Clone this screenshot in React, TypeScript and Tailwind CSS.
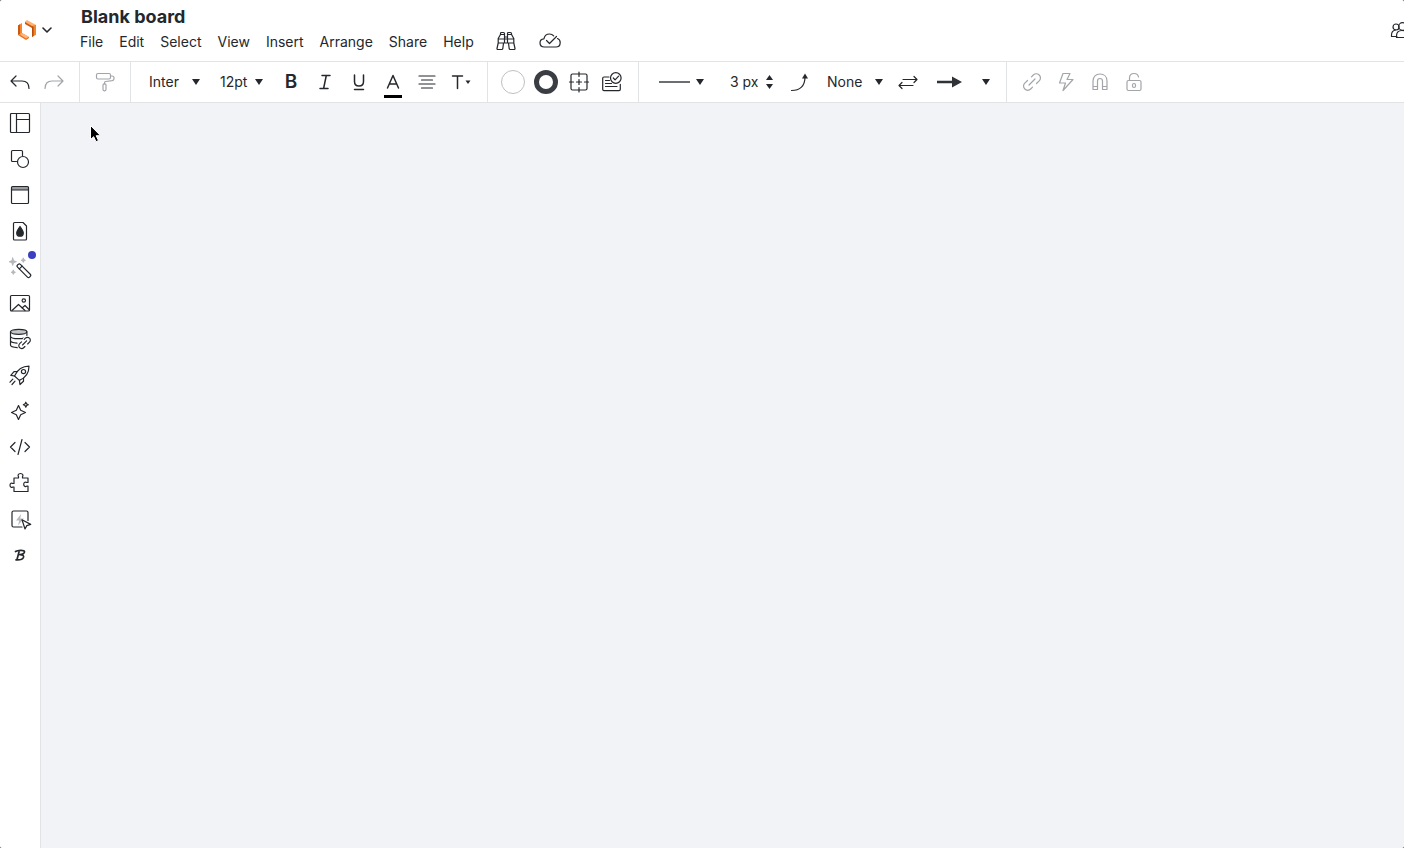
import React from "react";

type IconProps = { children: React.ReactNode; w?: number; h?: number; className?: string; sw?: number };

function Svg({ children, w = 24, h = 24, className = "", sw = 1.2 }: IconProps) {
  return (
    <svg
      width={w}
      height={h}
      viewBox={`0 0 ${w} ${h}`}
      fill="none"
      stroke="currentColor"
      strokeWidth={sw}
      strokeLinecap="round"
      strokeLinejoin="round"
      className={"shrink-0 " + className}
      aria-hidden="true"
    >
      {children}
    </svg>
  );
}

function Caret({ className = "" }: { className?: string }) {
  return (
    <svg width="8" height="6" viewBox="0 0 8 6" fill="currentColor" className={"pointer-events-none shrink-0 " + className} aria-hidden="true">
      <path d="M0 0h8L4 6z" />
    </svg>
  );
}

const chain =
  "M9 15l6-6M11.500 6.800 13.300 5c1.700-1.700 4.300-1.700 5.900 0 1.700 1.600 1.700 4.200 0 5.900L16.500 13.500M12.500 17.200 10.700 19c-1.700 1.700-4.300 1.700-5.900 0-1.700-1.600-1.700-4.200 0-5.900L7.500 10.500";

const menus = ["File", "Edit", "Select", "View", "Insert", "Arrange", "Share", "Help"];

function Header() {
  return (
    <header className="flex h-[62px] items-stretch overflow-hidden border-b border-[#e2e3e5] bg-white">
      <button aria-label="Home menu" className="flex w-[80px] shrink-0 items-center gap-1 pb-0.5 pl-4">
        <svg width="22" height="24" viewBox="0 0 22 24" aria-hidden="true">
          <path d="M2 7.500 6 5v10l-4 2z" fill="#f9842b" />
          <path d="M2 7.500 4 6.300V16l-2 1z" fill="#c65a12" />
          <path d="M2 17l4-2 7 4.200V20l-3 2z" fill="#e8701a" />
          <path d="M6 15l7 3.800-3 1.600-6-3.600z" fill="#ffb375" />
          <path d="M9 3.600 11 2l9 5-3 1.800-8-4.200z" fill="#ffb072" />
          <path d="M9 4v2l7 4V8z" fill="#c9580d" />
          <path d="M16 8l4-1.200v10L16 19z" fill="#f08530" />
          <path d="M16 8l1.600 1v9L16 19z" fill="#b84d0b" />
        </svg>
        <Svg w={10} h={8} sw={1.6}>
          <path d="M1 2l4 4 4-4" />
        </Svg>
      </button>
      <div className="flex flex-col pt-[5px]">
        <h1 className="pl-px text-[18px] leading-6 font-bold">Blank board</h1>
        <nav aria-label="Main menu" className="flex h-6 items-center gap-4 text-[14px]">
          {menus.map((m) => (
            <button key={m}>{m}</button>
          ))}
          <button aria-label="Find" className="ml-1">
            <Svg w={24} h={22}>
              <path d="M6.500 4.500V3.500c0-.6.400-1 1-1h2c.6 0 1 .4 1 1V13M13.500 13V3.500c0-.6.400-1 1-1h2c.6 0 1 .4 1 1v1M6.500 4.500h4M13.500 4.500h4M6.500 4.500 4.200 8.500V13L3 18.500c-.1.600.2 1 .8 1h4c.6 0 .9-.3 1-.8L9.500 13h5l.7 5.700c.1.500.4.800 1 .8h4c.6 0 .9-.4.800-1L19.800 13V8.500l-2.300-4M4.200 13h15.600M10.500 7h3M4.200 9h15.600" />
            </Svg>
          </button>
          <button aria-label="Saved" className="ml-1">
            <Svg w={24} h={22}>
              <path d="M19.500 8.500c1.800.6 2.700 2 2.700 3.900 0 2.800-1.700 4.600-4.400 4.600H6.300C3.700 17 2 15.300 2 13s1.500-3.900 3.900-4.100C6.500 6 8.700 4 11.600 4c1.700 0 3 .6 4.100 1.800" />
              <path d="M8.500 10.500l3 3 7-7" />
            </Svg>
          </button>
        </nav>
      </div>
      <button aria-label="Collaborators" className="-mr-2 ml-auto flex items-center pb-0.5">
        <Svg w={24} h={24}>
          <circle cx="8" cy="9" r="3" />
          <path d="M9 18.500H3.500V17c0-3 1.500-4.500 4-5M8.500 19.500V18c0-3.500 2-5.500 5.500-5.500s6 2 6 5.500v1.500z" />
          <circle cx="14.500" cy="8.500" r="3.800" />
        </Svg>
      </button>
    </header>
  );
}

function Tool({ label, children, muted = false, width = "w-[34px]", className = "" }: { label: string; children: React.ReactNode; muted?: boolean; width?: string; className?: string }) {
  return (
    <button aria-label={label} className={"flex h-10 shrink-0 items-center justify-center " + width + " " + (muted ? "text-[#a3a5a9] " : "") + className}>
      {children}
    </button>
  );
}

function Pick({ label, value, options, className }: { label: string; value: string; options: string[]; className: string }) {
  return (
    <label className={"grid shrink-0 items-center " + className}>
      <select aria-label={label} defaultValue={value} className="col-start-1 row-start-1 h-10 w-full appearance-none bg-transparent pb-0.5 outline-none">
        {options.map((o) => (
          <option key={o}>{o}</option>
        ))}
      </select>
      <Caret className="col-start-1 row-start-1 justify-self-end" />
    </label>
  );
}

function Toolbar() {
  const group = "flex shrink-0 items-center border-r border-[#e2e3e5]";
  return (
    <div role="toolbar" aria-label="Formatting" className="flex h-[41px] items-stretch overflow-hidden border-b border-[#e2e3e5] bg-white text-[14px]">
      <div className={group + " w-[80px] pl-[3px]"}>
        <Tool label="Undo">
          <Svg>
            <path d="M8 6 3 11l5 5M3 11h11c4 0 7 2.500 7 7.500" />
          </Svg>
        </Tool>
        <Tool label="Redo" muted>
          <Svg>
            <path d="M16 6l5 5-5 5M21 11H10c-4 0-7 2.500-7 7.500" />
          </Svg>
        </Tool>
      </div>
      <div className={group + " w-[51px] justify-center"}>
        <Tool label="Copy format" muted>
          <Svg>
            <rect x="3.500" y="3.500" width="14" height="5.500" rx="1.500" />
            <path d="M17.500 6h1.500c1.500 0 2 .8 2 2v.8c0 1.200-.6 1.700-1.700 1.900l-6.600.8c-.8.1-1.200.5-1.200 1.300v1" />
            <rect x="10" y="13.800" width="3" height="7" rx="1.200" />
          </Svg>
        </Tool>
      </div>
      <div className={group + " w-[357px] pl-[18px]"}>
        <Pick label="Font" value="Inter" options={["Inter", "Roboto", "Lato"]} className="mr-5 w-[51px]" />
        <Pick label="Font size" value="12pt" options={["10pt", "12pt", "14pt"]} className="mr-[11px] w-[43px]" />
        <Tool label="Bold">
          <span className="text-[19px] font-semibold">B</span>
        </Tool>
        <Tool label="Italic">
          <Svg sw={1.5}>
            <path d="M9 5.500h8M7 18.500h8M13.300 5.500l-2.700 13" />
          </Svg>
        </Tool>
        <Tool label="Underline">
          <Svg sw={1.5}>
            <path d="M7.500 5v6.500c0 3 1.500 4.500 4.500 4.500s4.500-1.500 4.500-4.500V5" />
            <path d="M7.500 19.500h9" />
          </Svg>
        </Tool>
        <Tool label="Text color">
          <Svg w={24} h={32} sw={1.5}>
            <path d="M6.500 22 12 9.500 17.500 22M8.500 18h7" />
            <path d="M3 31h18" stroke="#000" strokeWidth="4" strokeLinecap="butt" />
          </Svg>
        </Tool>
        <Tool label="Align text">
          <Svg>
            <path d="M4 6h16M6.500 10h11M4 14h16M6.500 18h11" />
          </Svg>
        </Tool>
        <Tool label="Text options">
          <Svg sw={1.5}>
            <path d="M3.500 6h10M8.500 6v12.500" />
            <path d="M16.500 10.500h5L19 14z" fill="currentColor" stroke="none" />
          </Svg>
        </Tool>
      </div>
      <div className={group + " w-[151px] pl-2"}>
        <Tool label="Fill color" width="w-[33px]">
          <span className="size-6 rounded-full border border-[#bfc0c3]" />
        </Tool>
        <Tool label="Border color" width="w-[33px]">
          <span className="size-6 rounded-full border-[5px] border-[#3a3e44]" />
        </Tool>
        <Tool label="Crop shape" width="w-[33px]">
          <Svg>
            <rect x="4" y="4" width="16" height="16" rx="1.500" />
            <path d="M12 2v4.500M12 17.500V22M2.500 12h4M17.500 12h4M12 9.500v5M9.500 12h5" />
          </Svg>
        </Tool>
        <Tool label="Shape options">
          <Svg>
            <path d="M9 7H4c-.8 0-1.300.5-1.300 1.300v11c0 .8.500 1.300 1.300 1.300h15c.8 0 1.300-.5 1.300-1.300v-5M5.500 10.500h4M5.500 13.500h6M5.500 16.500h11.500" />
            <circle cx="15.800" cy="8" r="5.300" />
            <path d="M13.300 8l1.800 1.900 3.500-3.700" />
          </Svg>
        </Tool>
      </div>
      <div className={group + " w-[368px] pl-5"}>
        <button aria-label="Line style" className="flex h-10 items-center gap-1.5">
          <span className="h-0.5 w-[31px] bg-[#6b6e73]" />
          <Caret />
        </button>
        <label className="ml-[26px] flex w-9">
          <input aria-label="Line width" defaultValue="3 px" className="h-10 w-full bg-transparent pb-0.5 outline-none" />
        </label>
        <div className="flex flex-col gap-1">
          <button aria-label="Increase line width">
            <svg width="7" height="5" viewBox="0 0 7 5" fill="currentColor" className="block" aria-hidden="true">
              <path d="M0 5h7L3.500 0z" />
            </svg>
          </button>
          <button aria-label="Decrease line width">
            <svg width="7" height="5" viewBox="0 0 7 5" fill="currentColor" className="block" aria-hidden="true">
              <path d="M0 0h7L3.500 5z" />
            </svg>
          </button>
        </div>
        <Tool label="Line shape" className="mx-2.5">
          <Svg>
            <path d="M3.500 20.500C12 20.500 17 16 17 7" />
            <path d="M14 8.500h6L17 3.500z" fill="currentColor" stroke="none" />
          </Svg>
        </Tool>
        <Pick label="Line start" value="None" options={["None", "Arrow"]} className="mr-2 w-[56px]" />
        <Tool label="Swap ends">
          <Svg>
            <path d="M7 9.500h14M18 6.500l3 3-3 3M17 15.500H3M6 12.500l-3 3 3 3" />
          </Svg>
        </Tool>
        <button aria-label="Line end" className="ml-3 flex h-10 items-center gap-5">
          <svg width="25" height="12" viewBox="0 0 25 12" fill="#2f3237" aria-hidden="true">
            <path d="M0 4.800h15V0.500L25 6l-10 5.500V7.200H0z" />
          </svg>
          <Caret />
        </button>
      </div>
      <div className="flex items-center pl-2">
        <Tool label="Link" muted>
          <Svg>
            <path d={chain} />
          </Svg>
        </Tool>
        <Tool label="Actions" muted>
          <Svg>
            <path d="M9 3.500h7L13 9.500h6L9 20.500l2.500-7.500h-6z" />
          </Svg>
        </Tool>
        <Tool label="Magnetize" muted>
          <Svg>
            <path d="M5 19.500V11c0-4.500 3-7 7-7s7 2.500 7 7v8.500h-4.500V11c0-1.600-1-2.500-2.500-2.500S9.500 9.400 9.500 11v8.500zM5 16.500h4.500M14.500 16.500H19" />
          </Svg>
        </Tool>
        <Tool label="Lock" muted>
          <Svg>
            <rect x="5" y="10.500" width="14" height="10" rx="1.500" />
            <path d="M7.500 10.500V8c0-2.800 1.700-4.500 4.500-4.500 2.500 0 4.200 1.500 4.500 3.500" />
            <rect x="10.500" y="13.500" width="3" height="4" rx="1.500" />
          </Svg>
        </Tool>
      </div>
    </div>
  );
}

const panels: { label: string; icon: React.ReactNode }[] = [
  {
    label: "Templates",
    icon: <path d="M3.500 2.500h17c.6 0 1 .4 1 1v17c0 .6-.4 1-1 1h-17c-.6 0-1-.4-1-1v-17c0-.6.4-1 1-1zM8.500 2.500v19M8.500 8.500h13" />,
  },
  {
    label: "Shapes",
    icon: (
      <>
        <path d="M8.500 14.500h-4c-.6 0-1-.4-1-1v-9c0-.6.4-1 1-1h9c.6 0 1 .4 1 1v4" />
        <circle cx="15" cy="15" r="5.500" />
      </>
    ),
  },
  {
    label: "Frames",
    icon: (
      <>
        <path d="M4 4h16v3H4z" fill="#9a9c9f" stroke="none" />
        <rect x="3.500" y="3.500" width="17" height="17" rx="1" />
        <path d="M3.500 7h17" />
      </>
    ),
  },
  {
    label: "Page color",
    icon: (
      <>
        <path d="M6.500 3.500H15l3.500 3.500v13c0 .6-.4 1-1 1h-11c-.6 0-1-.4-1-1v-15.500c0-.6.4-1 1-1z" />
        <path d="M12 7.500c2 2.700 3.300 4.600 3.300 6.400 0 2-1.400 3.300-3.300 3.300s-3.300-1.300-3.300-3.300c0-1.800 1.300-3.700 3.300-6.400z" fill="currentColor" />
      </>
    ),
  },
  {
    label: "Magic tools",
    icon: (
      <>
        <path
          d="M4.700 3l.9 2.800 2.800.9-2.800.9-.9 2.800-.9-2.800L1 6.700l2.800-.9zM15.300 3.200l.6 1.500 1.500.6-1.500.6-.6 1.500-.6-1.500-1.500-.6 1.500-.6zM5.300 15.200l.6 1.500 1.500.6-1.500.6-.6 1.500-.6-1.500-1.500-.6 1.500-.6z"
          fill="#b5b7ba"
          stroke="#b5b7ba"
          strokeWidth="1"
        />
        <g transform="rotate(45 15.900 15.700)">
          <rect x="7.400" y="13.700" width="17" height="4" rx="1.500" />
          <path d="M11.400 13.700v4" />
        </g>
      </>
    ),
  },
  {
    label: "Images",
    icon: (
      <>
        <rect x="2.500" y="4.500" width="19" height="15.500" rx="1" />
        <circle cx="15.800" cy="9.500" r="1.700" />
        <path d="M4 19.500l6.500-6 6.500 6M14 17l3-2.500 4 4" />
      </>
    ),
  },
  {
    label: "Data",
    icon: (
      <>
        <ellipse cx="10.700" cy="4.800" rx="8.200" ry="2.500" fill="#c5c6c8" />
        <path d="M2.500 4.800v4.400c0 1.500 3.500 2.500 8.200 2.500 3.500 0 8.200-.9 8.200-2.500V4.800M2.500 9.200v4.400c0 1.400 2.700 2.300 6.500 2.500M2.500 13.600V18c0 1.500 3 2.400 7 2.600" />
        <g transform="translate(8.400 7.800) scale(.68)">
          <path d={chain} stroke="#fff" strokeWidth="4.500" />
          <path d={chain} strokeWidth="1.700" />
        </g>
      </>
    ),
  },
  {
    label: "Quick start",
    icon: (
      <>
        <path d="M21 3.200C14 3.200 9.800 6 6.500 13l4.900 4.400C18 14.500 21 10.500 21 3.200z" />
        <path d="M9.300 8.600H6L2.800 12.300l3.700.7M15.500 15v3.200L12 21.500l-.6-4.100M4.800 16.200 2 19.200M7 18.200l-3 3.300" />
        <circle cx="15.500" cy="8.600" r="2.100" />
      </>
    ),
  },
  {
    label: "AI",
    icon: (
      <path d="M10.500 6.500 12.700 11.300 17.500 13.500 12.700 15.700 10.500 20.500 8.300 15.700 3.500 13.500 8.300 11.300zM17.800 3.200l.8 1.700 1.700.8-1.700.8-.8 1.700-.8-1.700-1.700-.8 1.700-.8z" />
    ),
  },
  { label: "Code", icon: <path d="M7 7.500 2.500 12 7 16.500M17 7.500l4.500 4.500-4.500 4.500M14 4.500l-4 15" /> },
  {
    label: "Extensions",
    icon: (
      <path d="M6 7h4.500V5.700C9.600 4.700 10 2.500 12.500 2.500s2.900 2.200 2 3.200V7H20v4.500h-1.300c-1-.9-3-.5-3 1.800s2 2.700 3 1.800H20v5.400H6V16H4.700c-.9.800-2.700.4-2.700-1.800s1.800-2.600 2.700-1.700H6z" />
    ),
  },
  {
    label: "Dynamic shapes",
    icon: (
      <>
        <path d="M13 7l-5 6.500h3.200L10 18.500l5.800-7h-3.500z" fill="#b8babd" stroke="none" />
        <path d="M14 20H5.500c-.8 0-1.500-.7-1.500-1.500v-13C4 4.700 4.700 4 5.500 4h13c.8 0 1.500.7 1.500 1.500v8" />
        <path d="M14 12.800l3 9.200 1.800-3.400 3.900-1.200z" fill="#fff" />
      </>
    ),
  },
  {
    label: "Brand kit",
    icon: <path d="M7.500 8.500c2-1.300 8.500-1.800 9 0 .4 1.800-2.500 3.200-4.500 3.200 3 0 4 .8 3.500 2.500-.7 2-4 2.900-7.500 2.700M11.200 8.300 9 16.500" strokeWidth="1.700" />,
  },
];

function Sidebar() {
  return (
    <aside aria-label="Panels" className="flex w-[41px] shrink-0 flex-col border-r border-[#e2e3e5] bg-white pt-0.5">
      {panels.map((p) => (
        <button key={p.label} aria-label={p.label} className="relative flex h-9 w-10 items-center justify-center">
          <Svg>{p.icon}</Svg>
          {p.label === "Magic tools" && <span className="absolute top-0.5 right-1 size-2 rounded-full bg-[#3b3fc0]" />}
        </button>
      ))}
    </aside>
  );
}

export default function App() {
  return (
    <div className="bg-[#77797c]">
      <div className="flex min-h-screen flex-col overflow-hidden rounded-[3px] bg-white font-['Inter',sans-serif] text-[#24272c]">
        <Header />
        <Toolbar />
        <div className="flex grow">
          <Sidebar />
          <main aria-label="Canvas" className="relative grow bg-[#f2f3f6]">
            <svg width="14" height="20" viewBox="0 0 14 20" className="absolute top-[21px] left-12" aria-hidden="true">
              <path d="M1.500 1.500v14l3.200-2.800 2.300 5 2.500-1.200-2.300-4.800h4.300z" fill="#000" stroke="#fff" strokeWidth="1" />
            </svg>
          </main>
        </div>
      </div>
    </div>
  );
}
